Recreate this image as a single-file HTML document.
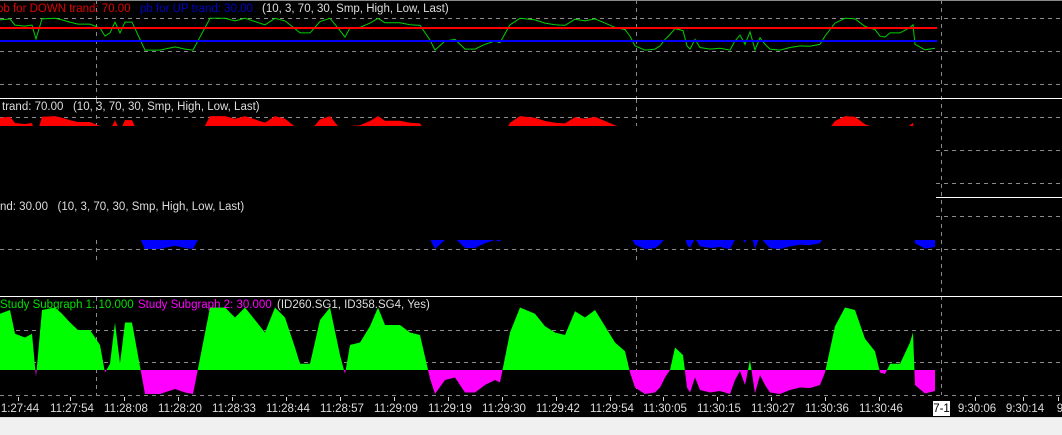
<!DOCTYPE html>
<html><head><meta charset="utf-8"><style>
html,body{margin:0;padding:0;background:#000;width:1062px;height:435px;overflow:hidden}
svg{display:block}
text{font-family:"Liberation Sans",sans-serif;font-size:11.5px}
</style></head><body>
<svg id="s" width="1062" height="435" xmlns="http://www.w3.org/2000/svg">
<rect width="1062" height="435" fill="#000"/>
<g stroke="#8a8a8a" stroke-dasharray="4,4" stroke-width="1">
<line x1="0" y1="18.5" x2="1062" y2="18.5"/><line x1="0" y1="51.5" x2="1062" y2="51.5"/><line x1="0" y1="84.5" x2="1062" y2="84.5"/>
<line x1="0" y1="117.5" x2="1062" y2="117.5"/><line x1="936" y1="150.5" x2="1062" y2="150.5"/><line x1="936" y1="183.5" x2="1062" y2="183.5"/>
<line x1="936" y1="216.5" x2="1062" y2="216.5"/><line x1="0" y1="249.5" x2="1062" y2="249.5"/>
<line x1="0" y1="330.5" x2="1062" y2="330.5"/><line x1="0" y1="362.5" x2="1062" y2="362.5"/><line x1="0" y1="395.5" x2="1062" y2="395.5"/>
<line x1="96.5" y1="0" x2="96.5" y2="98"/><line x1="636.5" y1="0" x2="636.5" y2="98"/><line x1="941.5" y1="0" x2="941.5" y2="395"/>
<line x1="96.5" y1="99" x2="96.5" y2="126"/><line x1="636.5" y1="99" x2="636.5" y2="126"/>
<line x1="96.5" y1="240" x2="96.5" y2="260"/><line x1="636.5" y1="240" x2="636.5" y2="260"/>
<line x1="96.5" y1="297" x2="96.5" y2="395"/><line x1="636.5" y1="297" x2="636.5" y2="395"/>
</g>
<line x1="0" y1="98.5" x2="1062" y2="98.5" stroke="#fff"/>
<line x1="936" y1="197.5" x2="1062" y2="197.5" stroke="#fff"/>
<line x1="0" y1="296.5" x2="1062" y2="296.5" stroke="#fff"/>
<line x1="0" y1="0.5" x2="1062" y2="0.5" stroke="#888"/>
<defs>
<clipPath id="ab"><rect x="0" y="290" width="1062" height="80"/></clipPath>
<clipPath id="be"><rect x="0" y="370" width="1062" height="30"/></clipPath>
<clipPath id="rc"><rect x="0" y="100" width="1062" height="26"/></clipPath>
<clipPath id="bc"><rect x="0" y="240" width="1062" height="20"/></clipPath>
</defs>
<g id="plots"></g>
<line x1="0" y1="28" x2="937" y2="28" stroke="#f00" stroke-width="2"/>
<line x1="0" y1="41" x2="937" y2="41" stroke="#00f" stroke-width="2"/>
<text x="-3" y="12" fill="#e00000">pb for DOWN trand: 70.00</text>
<text x="140" y="12" fill="#0000c8">pb for UP trand: 30.00</text>
<text x="262" y="12" fill="#ddd">(10, 3, 70, 30, Smp, High, Low, Last)</text>
<text x="2" y="110" fill="#ddd">trand: 70.00 &#160;&#160;(10, 3, 70, 30, Smp, High, Low, Last)</text>
<text x="0" y="210" fill="#ddd">nd: 30.00 &#160;&#160;(10, 3, 70, 30, Smp, High, Low, Last)</text>
<text x="0" y="308" fill="#00e000">Study Subgraph 1: 10.000</text>
<text x="138" y="308" fill="#ff00ff">Study Subgraph 2: 30.000</text>
<text x="277" y="308" fill="#ddd">(ID260.SG1, ID358.SG4, Yes)</text>
<g id="axis" fill="#ddd" text-anchor="middle"></g>
<rect x="0" y="417" width="1062" height="18" fill="#f0f0f0"/>
<line x1="0" y1="417.5" x2="1062" y2="417.5" stroke="#ddd"/>
</svg>
<script>
var P=[0,95,10,98,15,79,25,76,32,79,36,36,42,98,55,100,62,95,70,88,78,82,90,82,100,70,105,45,110,55,115,88,120,55,125,88,132,88,145,2,160,2,175,12,185,5,193,2,210,100,225,100,235,92,245,100,265,80,275,100,285,92,295,68,300,55,310,55,320,90,330,100,340,62,345,42,350,70,360,72,370,85,378,100,385,86,400,86,410,80,420,78,430,33,435,2,445,30,455,35,465,5,475,5,485,20,495,30,500,25,510,80,520,100,535,95,545,85,555,80,565,78,575,97,585,92,595,98,605,85,615,72,625,65,630,45,635,15,645,2,655,5,660,15,665,35,670,50,675,68,683,62,687,15,690,5,695,35,700,10,710,5,720,8,730,2,735,30,740,48,745,20,750,58,755,3,760,40,765,20,770,5,780,2,790,10,800,15,810,14,820,20,825,45,835,85,845,100,855,98,865,75,875,65,880,45,885,42,890,55,900,55,910,72,913,80,915,20,925,3,935,8];
function pts(f){var a=[];for(var i=0;i<P.length;i+=2)a.push(P[i]+','+f(P[i+1]).toFixed(1));return a.join(' ');}
var g='';
g+='<polyline fill="none" stroke="#00d000" stroke-width="1" points="'+pts(function(v){return 28+(70-v)*0.325})+'"/>';
g+='<polygon clip-path="url(#rc)" fill="#f00" points="0,126 '+pts(function(v){return 126-(v-70)*0.33})+' 935,126"/>';
g+='<polygon clip-path="url(#bc)" fill="#00f" points="0,240 '+pts(function(v){return 240+(30-v)*0.32})+' 935,240"/>';
var bp='0,370 '+pts(function(v){return v>=50?370-(v-50)*1.25:370+(50-v)*0.5})+' 935,370';
g+='<polygon clip-path="url(#ab)" fill="#00ff00" points="'+bp+'"/>';
g+='<polygon clip-path="url(#be)" fill="#ff00ff" points="'+bp+'"/>';
document.getElementById('plots').innerHTML=g;
var L=[[20,'1:27:44'],[72,'11:27:54'],[126,'11:28:08'],[180,'11:28:20'],[234,'11:28:33'],[288,'11:28:44'],[342,'11:28:57'],[396,'11:29:09'],[450,'11:29:19'],[504,'11:29:30'],[558,'11:29:42'],[612,'11:29:54'],[665,'11:30:05'],[719,'11:30:15'],[773,'11:30:27'],[827,'11:30:36'],[881,'11:30:46'],[977,'9:30:06'],[1025,'9:30:14'],[1060,'9']];
var a='';L.forEach(function(l){a+='<line x1="'+(l[0]-2)+'.5" y1="397" x2="'+(l[0]-2)+'.5" y2="401" stroke="#ddd"/><text x="'+l[0]+'" y="412">'+l[1]+'</text>';});
a+='<rect x="933" y="401" width="17" height="15" fill="#fff"/><text x="941.5" y="412" fill="#000">7-1</text>';
document.getElementById('axis').innerHTML=a;
</script>
</body></html>
